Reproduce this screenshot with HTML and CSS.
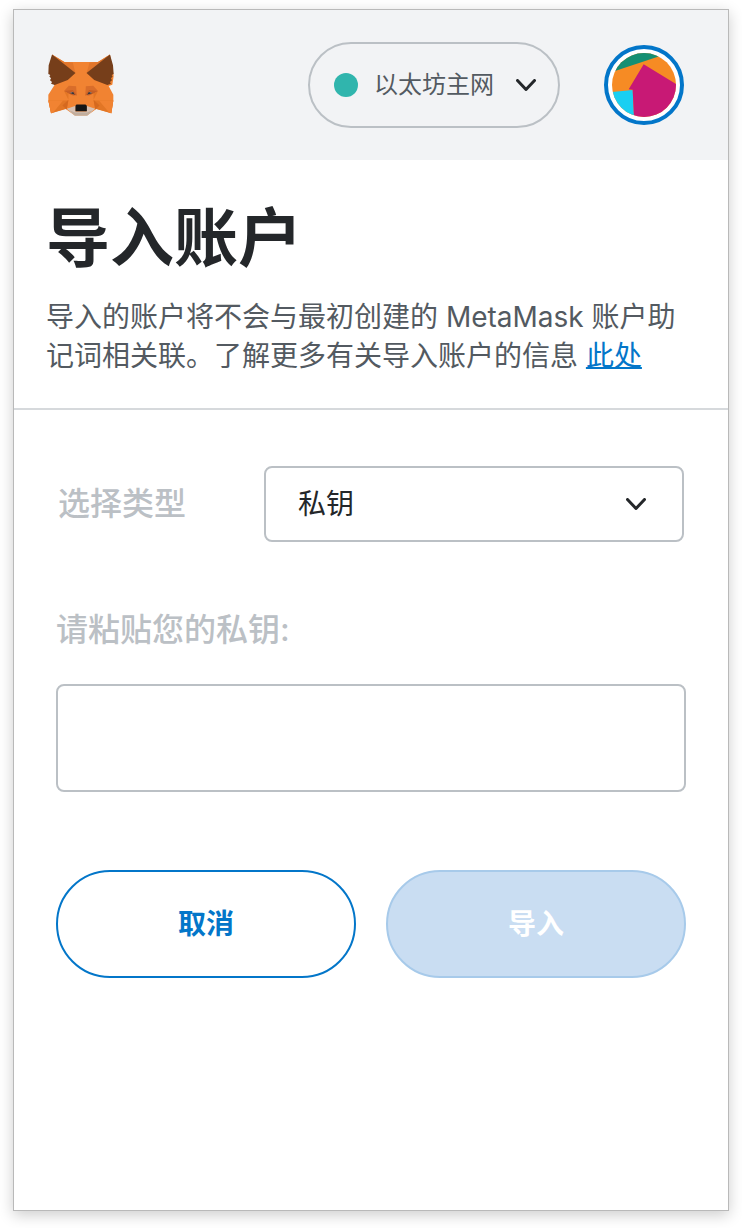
FILE: index.html
```html
<!DOCTYPE html>
<html lang="zh-CN">
<head>
<meta charset="utf-8">
<meta name="viewport" content="width=device-width, initial-scale=1">
<title>导入账户</title>
<link rel="stylesheet" href="styles.css">
</head>
<body>
<div class="popup">
  <header class="header">
    <svg class="logo" viewBox="23 27 197 184" role="img" aria-label="MetaMask">
      <path fill="#f18332" d="M35 28 72 50H172L208 28 219 92 215 118 204 122 218 148V165L212 203 168 190 140 210H103L75 190 32 203 24 165V148L42 120Z"/>
      <path fill="#e2762b" d="M35 28 72 50 97 52 105 84ZM208 28 172 50 147 52 138 84Z"/>
      <path fill="#763e1a" d="M35 28 105 83 82 104 43 119 32 115 35 110 29 105 32 99 27 94 30 89 24 86 25 60ZM208 28 138 83 161 104 200 119 211 115 208 110 214 105 211 99 216 94 213 89 219 86 217 60Z"/>
      <path fill="#e27625" d="M24 165H84L79 190 32 203ZM218 165H159L164 190 212 203Z"/>
      <path fill="#f18332" d="M24 165H68L38 202 32 203ZM218 165H175L206 202 212 203Z"/>
      <path fill="#d5691f" d="M66 180 84 163 79 192ZM177 180 159 163 164 192Z"/>
      <path fill="#d96d2a" d="M85 121 107 123 109 151 97 148 71 137ZM158 121 136 123 134 151 146 148 172 137Z"/>
      <path fill="#c65f26" d="M71 137 97 134 108 148 98 150 84 144ZM172 137 146 134 135 148 145 150 159 144Z"/>
      <path fill="#e27625" d="M71 137 84 144 84 163ZM172 137 159 144 159 163Z"/>
      <path fill="#d8b7a2" d="M89 142 96 139 101 147ZM154 142 147 139 142 147Z"/>
      <path fill="#30323a" d="M88 143 98 140 103 148ZM155 143 145 140 140 148Z"/>
      <path fill="#d7c1b3" d="M79 190 106 181 105 198H138L137 181 164 190 140 210H103Z"/>
      <path fill="#c0ad9e" d="M86 194 104 201H139L157 194 140 210H103Z"/>
      <path fill="#161616" d="M108 177H135L139 181V197H105V181Z"/>
    </svg>
    <div class="actions">
      <button class="network" type="button">
        <span class="dot"></span>
        <span>以太坊主网</span>
        <svg class="chevron" viewBox="0 0 20 12" aria-hidden="true"><path d="M1.5 1.5 10 10.5 18.5 1.5"/></svg>
      </button>
      <button class="account" type="button" aria-label="账户">
        <svg class="avatar" viewBox="0 0 192 192" aria-hidden="true">
          <path fill="#f68b24" d="M0 0H192V192H0Z"/>
          <path fill="#148f73" d="M0 57 142 10V0H0Z"/>
          <path fill="#19cff2" d="M0 117 62 111 66 192H0Z"/>
          <path fill="#c81975" d="M95 34 192 93V192H66L62 110 50 109Z"/>
        </svg>
      </button>
    </div>
  </header>
  <main>
    <section class="intro">
      <h1 class="title">导入账户</h1>
      <p class="lead">导入的账户将不会与最初创建的 MetaMask 账户助记词相关联。了解更多有关导入账户的信息 <a class="link" href="#">此处</a></p>
    </section>
    <form class="form">
      <div class="type-row">
        <label class="label" for="type">选择类型</label>
        <div class="select-box">
          <select class="select" id="type"><option>私钥</option></select>
          <svg class="chevron select-chevron" viewBox="0 0 20 12" aria-hidden="true"><path d="M1.5 1.5 10 10.5 18.5 1.5"/></svg>
        </div>
      </div>
      <label class="label" for="key">请粘贴您的私钥:</label>
      <input class="key" id="key" type="password">
      <div class="buttons">
        <button class="btn cancel" type="button">取消</button>
        <button class="btn import" type="submit" disabled>导入</button>
      </div>
    </form>
  </main>
</div>
</body>
</html>
```
FILE: styles.css
```css
* { box-sizing: border-box; }

body {
  margin: 0;
  min-height: 100vh;
  padding: 9px 13px 17px;
  display: flex;
  background: #fff;
  color: #24272a;
  font-family: Inter, "Noto Sans CJK SC", sans-serif;
}

button, input, select {
  font: inherit;
  color: inherit;
  margin: 0;
}

.popup {
  flex: 1;
  min-width: 0;
  border: 1px solid #b9b9b9;
  background: #fff;
  box-shadow: 0 4px 14px rgba(0, 0, 0, 0.2);
}

.header {
  display: flex;
  align-items: center;
  justify-content: space-between;
  height: 150px;
  padding: 0 44px 0 34px;
  background: #f2f3f5;
}

.logo { width: 66px; height: 62px; }

.actions {
  display: flex;
  align-items: center;
  gap: 44px;
}

.network {
  display: flex;
  align-items: center;
  gap: 16px;
  height: 86px;
  padding: 0 22px 0 24px;
  border: 2px solid #bbc0c5;
  border-radius: 43px;
  background: none;
  color: #535a61;
  font-size: 24px;
  line-height: 32px;
}

.dot {
  width: 24px;
  height: 24px;
  border-radius: 50%;
  background: #30b5ad;
}

.chevron {
  width: 20px;
  height: 12px;
  fill: none;
  stroke: #24272a;
  stroke-width: 3;
  stroke-linecap: round;
  stroke-linejoin: round;
}

.network .chevron { margin-left: 6px; }

.account {
  width: 80px;
  height: 80px;
  padding: 4px;
  border: 4px solid #0376c9;
  border-radius: 50%;
  background: #fff;
}

.avatar {
  display: block;
  width: 100%;
  height: 100%;
  border-radius: 50%;
}

.intro {
  padding: 38px 32px 32px;
  border-bottom: 2px solid #d6d9dc;
}

.title {
  margin: 0 0 20px;
  font-size: 64px;
  line-height: 80px;
  font-weight: 700;
}

.lead {
  margin: 0;
  color: #535a61;
  font-size: 28px;
  line-height: 39px;
}

.link {
  color: #0376c9;
  text-decoration-thickness: 2px;
}

.form { padding: 56px 42px; }

.type-row {
  display: grid;
  grid-template-columns: 206px 1fr;
  align-items: center;
  margin-bottom: 68px;
  padding: 0 2px;
}

.label {
  display: block;
  color: #bbc0c5;
  font-size: 32px;
  line-height: 40px;
  font-weight: 500;
}

.select-box { position: relative; }

.select {
  display: block;
  width: 100%;
  height: 76px;
  padding: 0 72px 0 32px;
  border: 2px solid #bbc0c5;
  border-radius: 8px;
  appearance: none;
  background: #fff;
  font-size: 28px;
}

.select-chevron {
  position: absolute;
  top: 32px;
  right: 38px;
  pointer-events: none;
}

.key {
  display: block;
  width: 100%;
  height: 108px;
  margin: 34px 0 78px;
  padding: 0 32px;
  border: 2px solid #bbc0c5;
  border-radius: 8px;
  background: #fff;
  font-size: 28px;
}

.buttons {
  display: grid;
  grid-template-columns: 1fr 1fr;
  gap: 30px;
}

.btn {
  height: 108px;
  border: 2px solid #0376c9;
  border-radius: 54px;
  font-size: 28px;
  line-height: 40px;
  font-weight: 700;
}

.cancel {
  background: #fff;
  color: #0376c9;
}

.import {
  border-color: #a7caea;
  background: #c9ddf2;
  color: #fff;
}
```
